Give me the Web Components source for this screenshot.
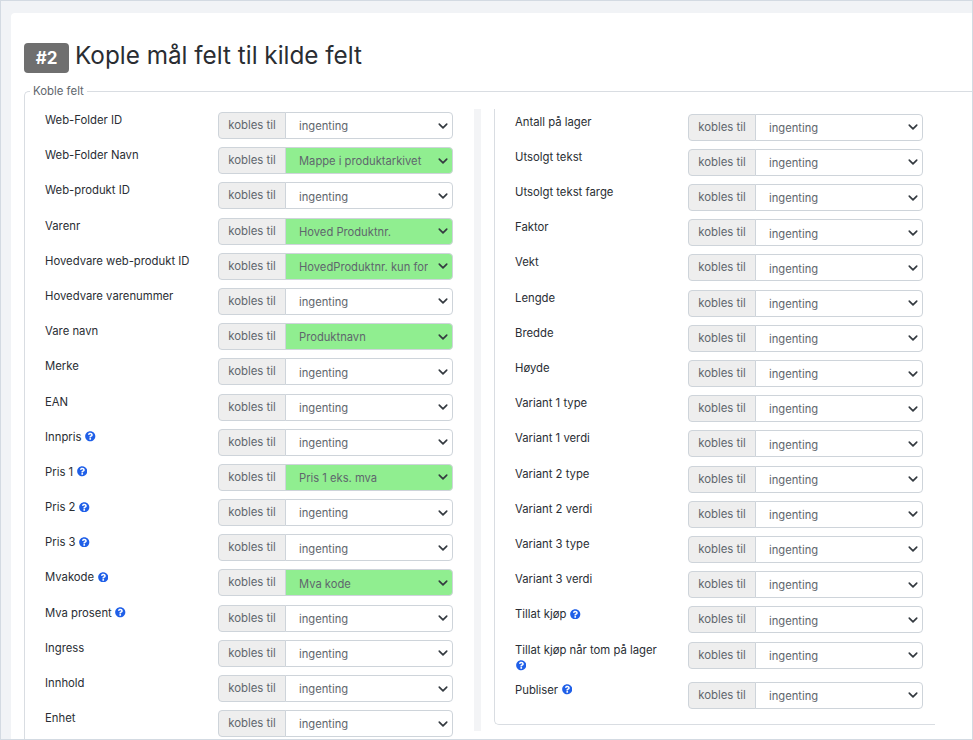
<!DOCTYPE html>
<html>
<head>
<meta charset="utf-8">
<title>Kople felt</title>
<style>
  html, body { margin: 0; height: 100%; overflow: hidden; }
  body { font-family: Inter, "Liberation Sans", sans-serif; background: #f1f3f6; }
</style>
</head>
<body>
<template id="map-row-tpl">
  <style>
    :host { display: flex; margin-bottom: 8.2px; color: #2a2e34; font-size: 11.3px; line-height: 16px; }
    .label { width: 173px; padding: 0 23px 0 0; box-sizing: border-box; flex: none; }
    .label svg { display: none; width: 10.5px; height: 10.5px; vertical-align: -1px; margin-left: 0.5px; }
    :host([help]) .label svg { display: inline; }
    .group { display: flex; width: 235px; height: 27px; flex: none; box-sizing: border-box; font-size: 11.4px; }
    .addon { width: 68px; box-sizing: border-box; background: #eeeeee; border: 1px solid #ced4da; border-radius: 4px 0 0 4px; color: #5f666d; text-align: center; line-height: 25px; }
    select { appearance: none; -webkit-appearance: none; flex: 1; min-width: 0; margin: 0 0 0 -1px; height: 27px; box-sizing: border-box; border: 1px solid #ced4da; border-radius: 0 4px 4px 0; padding: 1.5px 24px 0 13px; font: inherit; font-size: 11.2px; color: #5f666d; background: #fff url("data:image/svg+xml,%3csvg xmlns='http://www.w3.org/2000/svg' viewBox='0 0 16 16'%3e%3cpath fill='none' stroke='%23343a40' stroke-linecap='round' stroke-linejoin='round' stroke-width='2.6' d='M2 5l6 6 6-6'/%3e%3c/svg%3e") no-repeat right 4px center / 10px 10px; }
    :host([mapped]) select { background-color: #90ee90; }
  </style>
  <div class="label"><slot></slot><svg viewBox="0 0 512 512"><path fill="#1f5fe8" d="M504 256c0 137-111 248-248 248S8 393 8 256 119 8 256 8s248 111 248 248zM262.700 90c-54.500 0-89.300 23-116.600 63.800-3.500 5.300-2.400 12.400 2.700 16.300l34.700 26.300c5.200 3.900 12.600 3 16.700-2.100 17.900-22.700 30.100-35.800 57.300-35.800 20.400 0 45.700 13.100 45.700 33 0 15-12.400 22.700-32.600 34-23.600 13.200-54.800 29.700-54.800 70.900V302c0 6.600 5.400 12 12 12h56c6.600 0 12-5.400 12-12v-1.300c0-28.500 83.400-29.700 83.400-106.900C379.200 135.700 318.800 90 262.700 90zM256 338c-25.400 0-46 20.600-46 46 0 25.400 20.600 46 46 46s46-20.600 46-46c0-25.400-20.600-46-46-46z"/></svg></div>
  <div class="group"><div class="addon">kobles til</div><select></select></div>
</template>
<template id="map-panel-tpl">
  <style>
    :host { display: block; }
    .legend { font-size: 11.4px; line-height: 13px; color: #5f666d; padding: 0 3px; background: #fff; position: absolute; left: 5px; top: -7px; }
    .box { position: relative; border: 1px solid #d9dde2; border-right: 0; border-bottom: 0; border-radius: 5px 0 0 0; padding: 20px 0 0 20px; height: 700px; display: flex; }
    .col { width: 408px; flex: none; }
    .gap { width: 7px; flex: none; background: #f3f4f6; margin: -3px 0 0 21px; height: 622px; }
    .right { margin: -3px 0 0 13px; width: 441px; height: 616px; box-sizing: border-box; flex: none; border: 1px solid #d9dde2; border-top: 0; border-right: 0; border-radius: 0 0 0 5px; padding: 4.7px 0 0 20px; }
  </style>
  <div class="box">
    <span class="legend">Koble felt</span>
    <div class="col"><slot name="left"></slot></div>
    <div class="gap"></div>
    <div class="right"><slot name="right"></slot></div>
  </div>
</template>
<template id="map-page-tpl">
  <style>
    :host { display: block; height: 740px; box-sizing: border-box; border: 1px solid #d3dae2; padding: 12px 0 0 10px; overflow: hidden; }
    .card { background: #fff; height: 100%; border-radius: 4px 0 0 0; padding: 30px 0 0 13px; box-sizing: border-box; overflow: hidden; }
    h2 { margin: 0 0 18px; font-size: 24.3px; font-weight: 400; line-height: 30px; height: 30px; color: #2a2d32; display: flex; align-items: center; }
    h2 .text { position: relative; top: -3px; }
    .badge { background: #6f6f6f; color: #fff; font-size: 17px; font-weight: 700; width: 45px; height: 30px; border-radius: 4px; display: flex; align-items: center; justify-content: center; margin-right: 6px; }
  </style>
  <div class="card">
    <h2><span class="badge">#2</span><span class="text">Kople mål felt til kilde felt</span></h2>
    <slot></slot>
  </div>
</template>
<map-page>
  <map-panel id="panel"></map-panel>
</map-page>
<script>
  class MapPage extends HTMLElement {
    constructor() {
      super();
      this.attachShadow({ mode: 'open' }).appendChild(document.getElementById('map-page-tpl').content.cloneNode(true));
    }
  }
  class MapPanel extends HTMLElement {
    constructor() {
      super();
      this.attachShadow({ mode: 'open' }).appendChild(document.getElementById('map-panel-tpl').content.cloneNode(true));
    }
  }
  class MapRow extends HTMLElement {
    constructor() {
      super();
      this.attachShadow({ mode: 'open' }).appendChild(document.getElementById('map-row-tpl').content.cloneNode(true));
    }
    connectedCallback() {
      const sel = this.shadowRoot.querySelector('select');
      const opt = document.createElement('option');
      opt.textContent = this.getAttribute('mapped') || 'ingenting';
      sel.appendChild(opt);
    }
  }
  customElements.define('map-page', MapPage);
  customElements.define('map-panel', MapPanel);
  customElements.define('map-row', MapRow);

  const left = [
    ['Web-Folder ID'], ['Web-Folder Navn', 'Mappe i produktarkivet'], ['Web-produkt ID'],
    ['Varenr', 'Hoved Produktnr.'], ['Hovedvare web-produkt ID', 'HovedProduktnr. kun for varianter'],
    ['Hovedvare varenummer'], ['Vare navn', 'Produktnavn'], ['Merke'], ['EAN'],
    ['Innpris', null, true], ['Pris 1', 'Pris 1 eks. mva', true], ['Pris 2', null, true], ['Pris 3', null, true],
    ['Mvakode', 'Mva kode', true], ['Mva prosent', null, true], ['Ingress'], ['Innhold'], ['Enhet']
  ];
  const right = [
    ['Antall på lager'], ['Utsolgt tekst'], ['Utsolgt tekst farge'], ['Faktor'], ['Vekt'], ['Lengde'],
    ['Bredde'], ['Høyde'], ['Variant 1 type'], ['Variant 1 verdi'], ['Variant 2 type'], ['Variant 2 verdi'],
    ['Variant 3 type'], ['Variant 3 verdi'], ['Tillat kjøp', null, true],
    ['Tillat kjøp når tom på lager', null, true], ['Publiser', null, true]
  ];
  const panel = document.getElementById('panel');
  function addRows(rows, slot) {
    rows.forEach(([label, mapped, help]) => {
      const row = document.createElement('map-row');
      row.slot = slot;
      row.textContent = help ? label + ' ' : label;
      if (mapped) row.setAttribute('mapped', mapped);
      if (help) row.setAttribute('help', '');
      panel.appendChild(row);
    });
  }
  addRows(left, 'left');
  addRows(right, 'right');
</script>
</body>
</html>
